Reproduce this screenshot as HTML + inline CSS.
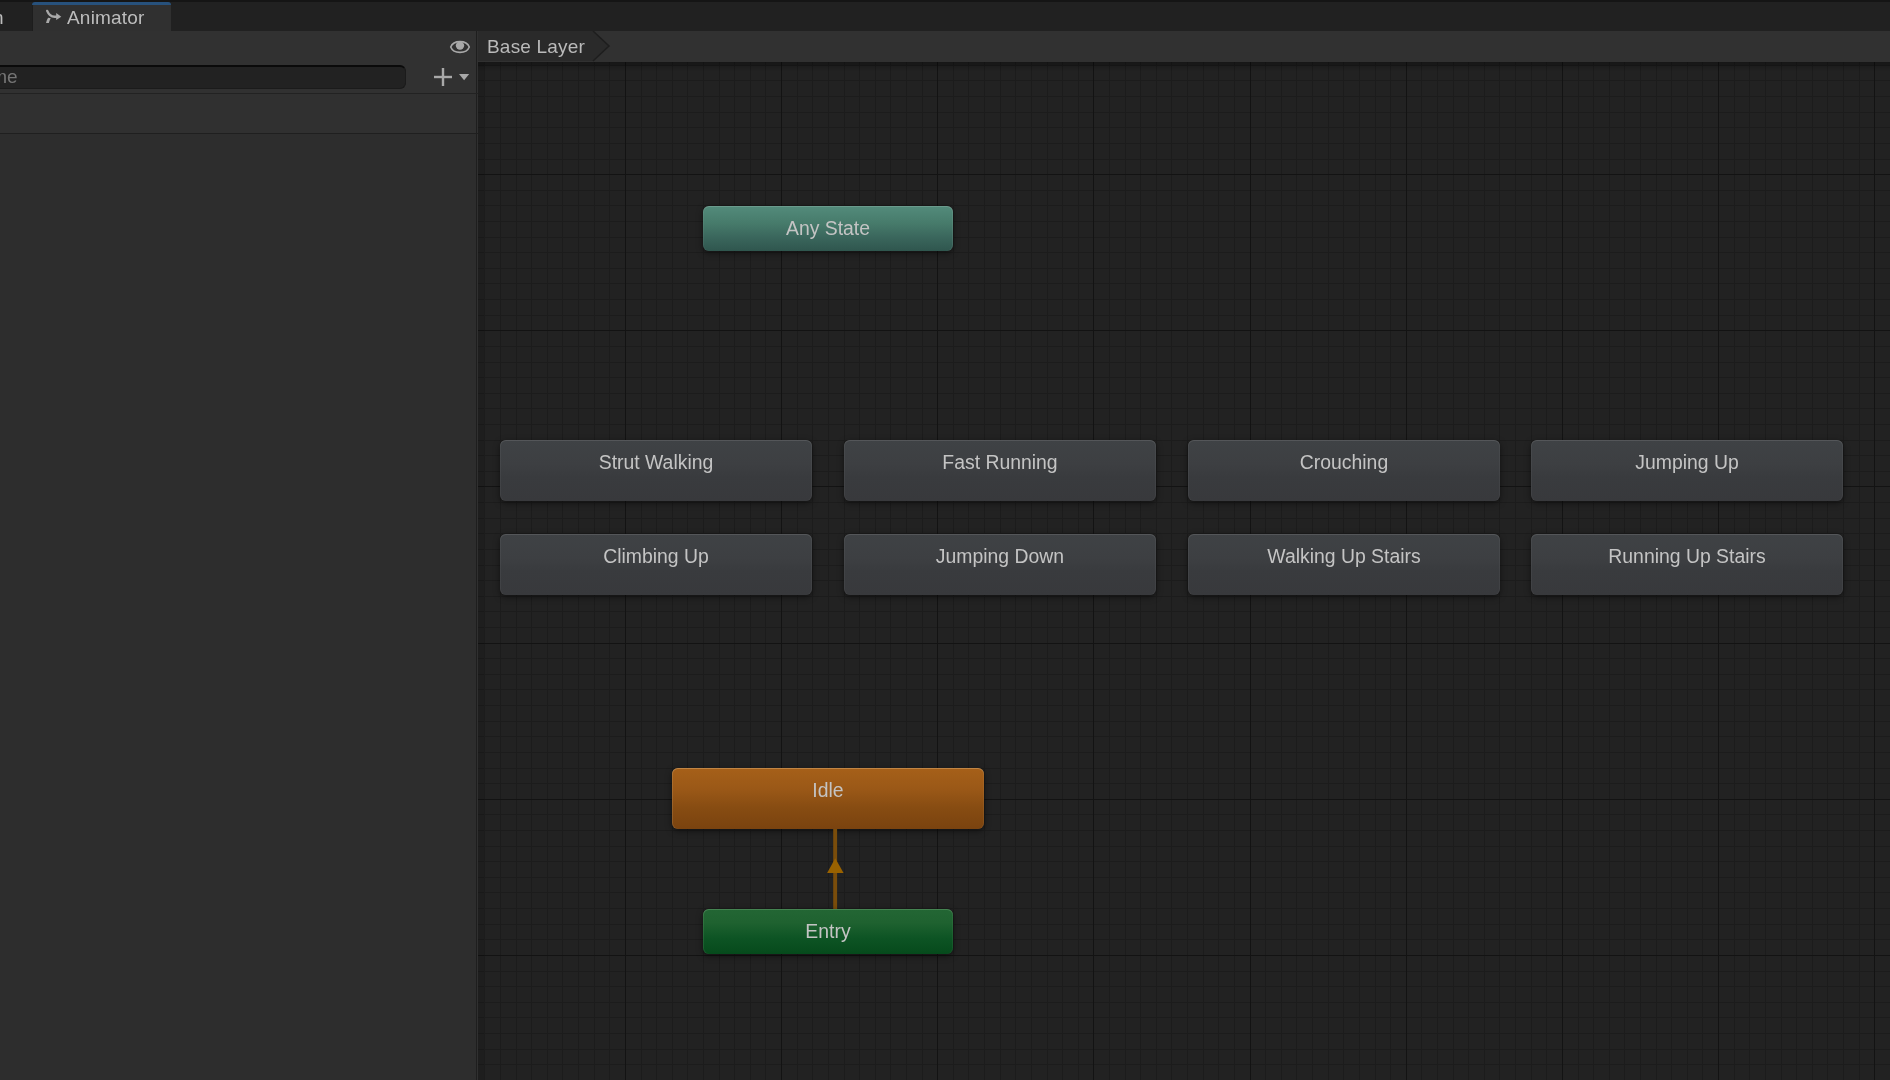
<!DOCTYPE html>
<html><head><meta charset="utf-8">
<style>
*{margin:0;padding:0;box-sizing:border-box}
html,body{width:1890px;height:1080px;overflow:hidden;background:#212121;font-family:"Liberation Sans",sans-serif}
.abs{position:absolute}
div{will-change:transform}
#topline{left:0;top:0;width:1890px;height:2px;background:#151515}
#tabbar{left:0;top:2px;width:1890px;height:29px;background:#212121}
#tab{left:32px;top:2px;width:139px;height:29px;background:#303030;border-left:1px solid #1d1d1d;border-radius:4px 4px 0 0}
#tabblue{left:32px;top:2px;width:139px;height:3px;background:#27517c;border-radius:3px 3px 0 0}
#tabtxt{left:34px;top:5px;letter-spacing:0.2px;font-size:19px;color:#bdbdbd;line-height:22px;white-space:nowrap}
#ltxt{left:-7.5px;top:7px;font-size:19px;color:#bdbdbd;line-height:22px}
#left{left:0;top:31px;width:476px;height:1049px;background:#2d2d2d}
#lhead{left:0;top:0;width:476px;height:62px;background:#313131}
#lsep1{left:0;top:62px;width:476px;height:1px;background:#222}
#lrow{left:0;top:63px;width:476px;height:39px;background:#303030}
#lsep2{left:0;top:102px;width:476px;height:1px;background:#1f1f1f}
#search{left:-20px;top:34px;width:426px;height:24px;background:#222222;border:1px solid #1b1b1b;border-top:2px solid #0a0a0a;border-radius:6px}
#ph{left:-33px;top:35px;font-size:19px;color:#757575;line-height:22px}
#split{left:476px;top:31px;width:2px;height:1049px;background:linear-gradient(90deg,#1e1e1e 50%,#303030 50%)}
#rtool{left:478px;top:31px;width:1412px;height:31px;background:#313131}
#crumb{left:478px;top:31px;width:132px;height:30px}
#crumbtxt{left:487px;top:36px;letter-spacing:0.2px;font-size:19px;color:#bababa;line-height:22px;white-space:nowrap}
#graph{left:478px;top:62px;width:1412px;height:1018px;background:#222222;overflow:hidden}
.node{position:absolute;width:312px;height:61px;border-radius:6px;background:linear-gradient(#3f4245,#3d3f42 40%,#393b3e 60%,#38393c);box-shadow:inset 0 1px 0 rgba(255,255,255,.11),inset 1px 0 0 rgba(255,255,255,.045),inset -1px 0 0 rgba(255,255,255,.045),0 2px 6px rgba(0,0,0,.5);text-align:center;color:#c4c4c4;font-size:19.4px;line-height:22px;padding-top:11px;white-space:nowrap}
.r2{}
.small{width:250px;height:45px;padding-top:11px}
.any{background:linear-gradient(#538b7b,#467a6a 40%,#3a665c 70%,#2f564e);box-shadow:inset 0 1px 0 rgba(255,255,255,.14),inset -1px 0 0 rgba(255,255,255,.08),inset 1px 0 0 rgba(255,255,255,.05),0 2px 6px rgba(0,0,0,.5)}
.idle{background:linear-gradient(#a66019,#9a5817 35%,#874c12 65%,#7a430f);box-shadow:inset 0 1px 0 rgba(255,220,170,.3),inset 1px 0 0 rgba(255,220,170,.14),inset -1px 0 0 rgba(255,220,170,.08),0 2px 6px rgba(0,0,0,.5)}
.entry{background:linear-gradient(#236634,#1f6230 30%,#0d5424 65%,#064a1c);box-shadow:inset 0 1px 0 rgba(200,255,200,.2),inset 1px 0 0 rgba(200,255,200,.1),inset -1px 0 0 rgba(200,255,200,.06),0 2px 6px rgba(0,0,0,.5)}
</style></head><body>
<div id="topline" class="abs"></div>
<div id="tabbar" class="abs"></div>
<div id="ltxt" class="abs">n</div>
<div id="tab" class="abs"></div><div id="tabblue" class="abs"></div>
<svg class="abs" style="left:42px;top:6px" width="24" height="22" viewBox="42 6 24 22">
<path d="M47.2 10.9 C48.3 13.6 50.2 16.8 54.5 16.8 L57 16.8" stroke="#a9a9a9" stroke-width="2.4" stroke-linecap="round" fill="none"/>
<path d="M56.2 12.9 L61.3 16.7 L56.2 20 Z" fill="#a9a9a9"/>
<path d="M46 22.9 L48.9 22.9 C49.4 21 50 19.3 50.8 18.2 L48.1 17.8 C47.2 19.2 46.5 21 46 22.9 Z" fill="#a9a9a9"/>
</svg>
<div class="abs" style="left:33px;top:2px;width:138px;height:29px">
<div id="tabtxt" class="abs">Animator</div></div>
<div id="left" class="abs">
<div id="lhead" class="abs"></div>
<div id="lsep1" class="abs"></div>
<div id="lrow" class="abs"></div>
<div id="lsep2" class="abs"></div>
<div id="search" class="abs"></div>
<div id="ph" class="abs">Name</div>
<svg class="abs" style="left:420px;top:0px" width="56" height="62" viewBox="420 31 56 62">
<clipPath id="ec"><path d="M450.7 47 C453.5 39.8 466.5 39.8 469.3 47 C466.5 54.2 453.5 54.2 450.7 47Z"/></clipPath>
<circle cx="460" cy="45.6" r="4.2" fill="#a8a8a8" clip-path="url(#ec)"/>
<path d="M450.7 47 C453.5 39.8 466.5 39.8 469.3 47 C466.5 54.2 453.5 54.2 450.7 47Z" stroke="#a8a8a8" stroke-width="1.6" fill="none"/>
<rect x="434" y="75.8" width="18" height="2.4" fill="#a8a8a8"/>
<rect x="441.8" y="68" width="2.4" height="18" fill="#a8a8a8"/>
<path d="M459 74 H469.2 L464.1 80.3 Z" fill="#a8a8a8"/>
</svg>
</div>
<div id="split" class="abs"></div>
<div class="abs" style="left:476px;top:93px;width:2px;height:1px;background:#222"></div>
<div class="abs" style="left:476px;top:133px;width:2px;height:1px;background:#1f1f1f"></div>
<div id="rtool" class="abs"></div>
<svg class="abs" style="left:478px;top:31px" width="140" height="31" viewBox="0 0 140 31">
<path d="M0 0 H115 L131 15 L115 30 H0 Z" fill="#2a2a2a"/>
<path d="M115 0 L131 15 L115 30" stroke="#1e1e1e" stroke-width="1.5" fill="none"/>
</svg>
<div id="crumbtxt" class="abs">Base Layer</div>
<div id="graph" class="abs">
<svg width="1412" height="1018" style="position:absolute;left:0;top:0" shape-rendering="crispEdges">
<path fill="#1c1c1c" d="M6 0h1v1018h-1zM22 0h1v1018h-1zM38 0h1v1018h-1zM53 0h1v1018h-1zM69 0h1v1018h-1zM84 0h1v1018h-1zM100 0h1v1018h-1zM116 0h1v1018h-1zM131 0h1v1018h-1zM163 0h1v1018h-1zM178 0h1v1018h-1zM194 0h1v1018h-1zM209 0h1v1018h-1zM225 0h1v1018h-1zM241 0h1v1018h-1zM256 0h1v1018h-1zM272 0h1v1018h-1zM287 0h1v1018h-1zM319 0h1v1018h-1zM334 0h1v1018h-1zM350 0h1v1018h-1zM366 0h1v1018h-1zM381 0h1v1018h-1zM397 0h1v1018h-1zM412 0h1v1018h-1zM428 0h1v1018h-1zM444 0h1v1018h-1zM475 0h1v1018h-1zM490 0h1v1018h-1zM506 0h1v1018h-1zM522 0h1v1018h-1zM537 0h1v1018h-1zM553 0h1v1018h-1zM569 0h1v1018h-1zM584 0h1v1018h-1zM600 0h1v1018h-1zM631 0h1v1018h-1zM647 0h1v1018h-1zM662 0h1v1018h-1zM678 0h1v1018h-1zM693 0h1v1018h-1zM709 0h1v1018h-1zM725 0h1v1018h-1zM740 0h1v1018h-1zM756 0h1v1018h-1zM787 0h1v1018h-1zM803 0h1v1018h-1zM818 0h1v1018h-1zM834 0h1v1018h-1zM850 0h1v1018h-1zM865 0h1v1018h-1zM881 0h1v1018h-1zM897 0h1v1018h-1zM912 0h1v1018h-1zM943 0h1v1018h-1zM959 0h1v1018h-1zM975 0h1v1018h-1zM990 0h1v1018h-1zM1006 0h1v1018h-1zM1021 0h1v1018h-1zM1037 0h1v1018h-1zM1053 0h1v1018h-1zM1068 0h1v1018h-1zM1100 0h1v1018h-1zM1115 0h1v1018h-1zM1131 0h1v1018h-1zM1146 0h1v1018h-1zM1162 0h1v1018h-1zM1178 0h1v1018h-1zM1193 0h1v1018h-1zM1209 0h1v1018h-1zM1224 0h1v1018h-1zM1256 0h1v1018h-1zM1271 0h1v1018h-1zM1287 0h1v1018h-1zM1303 0h1v1018h-1zM1318 0h1v1018h-1zM1334 0h1v1018h-1zM1349 0h1v1018h-1zM1365 0h1v1018h-1zM1381 0h1v1018h-1zM0 3h1412v1h-1412zM0 18h1412v1h-1412zM0 34h1412v1h-1412zM0 50h1412v1h-1412zM0 65h1412v1h-1412zM0 81h1412v1h-1412zM0 97h1412v1h-1412zM0 128h1412v1h-1412zM0 143h1412v1h-1412zM0 159h1412v1h-1412zM0 175h1412v1h-1412zM0 190h1412v1h-1412zM0 206h1412v1h-1412zM0 221h1412v1h-1412zM0 237h1412v1h-1412zM0 253h1412v1h-1412zM0 284h1412v1h-1412zM0 300h1412v1h-1412zM0 315h1412v1h-1412zM0 331h1412v1h-1412zM0 346h1412v1h-1412zM0 362h1412v1h-1412zM0 378h1412v1h-1412zM0 393h1412v1h-1412zM0 409h1412v1h-1412zM0 440h1412v1h-1412zM0 456h1412v1h-1412zM0 471h1412v1h-1412zM0 487h1412v1h-1412zM0 503h1412v1h-1412zM0 518h1412v1h-1412zM0 534h1412v1h-1412zM0 549h1412v1h-1412zM0 565h1412v1h-1412zM0 596h1412v1h-1412zM0 612h1412v1h-1412zM0 627h1412v1h-1412zM0 643h1412v1h-1412zM0 659h1412v1h-1412zM0 674h1412v1h-1412zM0 690h1412v1h-1412zM0 706h1412v1h-1412zM0 721h1412v1h-1412zM0 752h1412v1h-1412zM0 768h1412v1h-1412zM0 784h1412v1h-1412zM0 799h1412v1h-1412zM0 815h1412v1h-1412zM0 830h1412v1h-1412zM0 846h1412v1h-1412zM0 862h1412v1h-1412zM0 877h1412v1h-1412zM0 909h1412v1h-1412zM0 924h1412v1h-1412zM0 940h1412v1h-1412zM0 955h1412v1h-1412zM0 971h1412v1h-1412zM0 987h1412v1h-1412zM0 1002h1412v1h-1412z"/>
<path fill="#131313" d="M147 0h1v1018h-1zM303 0h1v1018h-1zM459 0h1v1018h-1zM615 0h1v1018h-1zM772 0h1v1018h-1zM928 0h1v1018h-1zM1084 0h1v1018h-1zM1240 0h1v1018h-1zM1396 0h1v1018h-1zM0 112h1412v1h-1412zM0 268h1412v1h-1412zM0 424h1412v1h-1412zM0 581h1412v1h-1412zM0 737h1412v1h-1412zM0 893h1412v1h-1412z"/>
</svg>
<div class="abs" style="left:0;top:0;width:6px;height:1018px;background:rgba(0,0,0,.09)"></div>
<div class="abs" style="left:0;top:0;width:1412px;height:9px;background:linear-gradient(rgba(0,0,0,.3),rgba(0,0,0,.27) 3px,rgba(0,0,0,.1) 5px,rgba(0,0,0,.05) 8px,rgba(0,0,0,0))"></div>
<div class="node small any" style="left:225px;top:144px">Any State</div>
<div class="node st" style="left:22px;top:378px">Strut Walking</div>
<div class="node st" style="left:366px;top:378px">Fast Running</div>
<div class="node st" style="left:710px;top:378px">Crouching</div>
<div class="node st" style="left:1053px;top:378px">Jumping Up</div>
<div class="node st r2" style="left:22px;top:472px">Climbing Up</div>
<div class="node st r2" style="left:366px;top:472px">Jumping Down</div>
<div class="node st r2" style="left:710px;top:472px">Walking Up Stairs</div>
<div class="node st r2" style="left:1053px;top:472px">Running Up Stairs</div>

<div class="node idle" style="left:194px;top:706px">Idle</div>
<svg class="abs" style="left:342px;top:764px" width="30" height="90" viewBox="0 0 30 90">
<rect x="13.2" y="3" width="3.9" height="80" fill="#7a4d0b"/>
<path d="M7.1 46.9 L15.3 32.3 L23.6 46.9 Z" fill="#996200"/>
</svg>
<div class="node small entry" style="left:225px;top:847px">Entry</div>
</div>
</body></html>
